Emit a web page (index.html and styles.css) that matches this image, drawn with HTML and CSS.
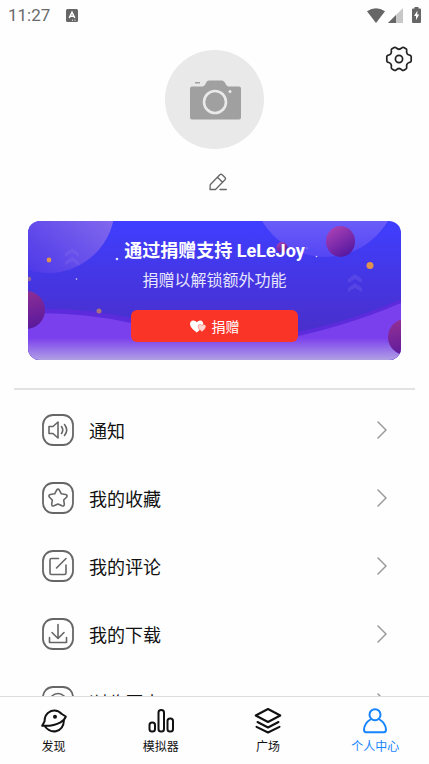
FILE: index.html
```html
<!DOCTYPE html>
<html lang="zh-CN">
<head>
<meta charset="utf-8">
<meta name="viewport" content="width=device-width, initial-scale=1">
<title>个人中心</title>
<link rel="stylesheet" href="styles.css">
</head>
<body>
<header class="status">
  <div class="status-side">
    <time>11:27</time>
    <svg width="12" height="13" viewBox="0 0 12 13" aria-hidden="true"><rect width="12" height="13" rx="1.5" fill="#666"/><path d="M3.2 9 6 3.200 8.800 9M4.200 7.200h3.600" fill="none" stroke="#fff" stroke-width="1.500"/><path d="M6 11.200h1M8.500 11.200h1" stroke="#fff"/></svg>
  </div>
  <div class="status-side status-right">
    <svg width="18" height="15" viewBox="0 0 18 15" aria-hidden="true"><path d="M0 3.200Q9-2.600 18 3.200L9 15Z" fill="#666"/></svg>
    <svg width="15" height="15" viewBox="0 0 15 15" aria-hidden="true"><path d="M15 0V15H0Z" fill="#c8c8c8"/><path d="M8 7V15H0Z" fill="#666"/></svg>
    <svg class="battery" width="9" height="16" viewBox="0 0 9 16" aria-hidden="true"><path d="M2.500 0h4v1.500H8q1 0 1 1V15q0 1-1 1H1q-1 0-1-1V2.500q0-1 1-1h1.500Z" fill="#666"/><path d="M5.500 3.500 2 9h2v4l3.300-5.500H5.200Z" fill="#fff"/></svg>
  </div>
</header>

<main class="content">
  <button class="settings" aria-label="设置">
    <svg width="28" height="28" viewBox="0 0 28 28" fill="none" stroke="#222" stroke-width="1.700" stroke-linejoin="round"><path d="M9.200 2.500Q10.300 2 11.200 2.900Q14 5.600 16.800 2.900Q17.700 2 18.800 2.500L21 3.800Q21.900 4.400 21.700 5.500Q20.900 9.200 24.700 10.200Q26 10.500 26.200 11.700V15.800Q26 17 24.700 17.300Q20.900 18.500 21.700 22.200Q21.900 23.300 21 23.900L18.800 25.200Q17.700 25.700 16.800 24.800Q14 22.200 11.200 24.800Q10.300 25.700 9.200 25.200L7 23.900Q6.100 23.300 6.300 22.200Q7.100 18.500 3.300 17.300Q2 17 1.800 15.800V11.700Q2 10.500 3.300 10.200Q7.100 9.200 6.300 5.500Q6.100 4.400 7 3.800Z"/><circle cx="14" cy="14" r="3.600"/></svg>
  </button>

  <button class="avatar" aria-label="更换头像">
    <svg width="52" height="40" viewBox="-1 0 52 40" aria-hidden="true"><path d="M5 2h5v1.500H5Z" fill="#a0a0a0"/><path d="M2 6.500H13Q15.500 5 16.500 2Q17.200 .5 19 .5H32Q33.500 .5 34.500 2Q36 5.500 38 6.500H49Q51 6.500 51 8.500V37.500Q51 39.500 49 39.500H2Q0 39.500 0 37.500V8.500Q0 6.500 2 6.500Z" fill="#a0a0a0"/><circle cx="25" cy="22" r="11" fill="none" stroke="#e9e9e9" stroke-width="2.600"/><circle cx="40" cy="11.500" r="1.500" fill="#e9e9e9"/></svg>
  </button>

  <button class="edit" aria-label="编辑昵称">
    <svg width="18" height="18" viewBox="0 0 18 18" fill="none" stroke="#666" stroke-width="1.300" stroke-linejoin="round" stroke-linecap="round"><path d="M1 16.500 1.200 11.800 10.800 1.800Q12 .7 13.200 1.800L16 4.500Q17 5.700 16 6.800L6.500 16.500ZM8.500 4.200 13.500 9.200M11 16.500H17.300"/></svg>
  </button>

  <section class="banner">
    <svg class="banner-art" viewBox="0 0 373 139" preserveAspectRatio="none" aria-hidden="true">
      <defs>
        <linearGradient id="sky" x1="0" y1="0" x2="0" y2="1"><stop offset="0" stop-color="#3f3eff"/><stop offset=".75" stop-color="#4930ce"/><stop offset="1" stop-color="#4930ce"/></linearGradient>
        <linearGradient id="moon" x1="1" y1=".25" x2=".35" y2="1"><stop offset="0" stop-color="#967bf0"/><stop offset="1" stop-color="#4d38e8"/></linearGradient>
        <linearGradient id="moon2" x1="0" y1=".5" x2="0" y2="1"><stop offset="0" stop-color="#8074fd"/><stop offset="1" stop-color="#5546f4"/></linearGradient>
        <linearGradient id="ball" x1=".2" y1="0" x2=".8" y2="1"><stop offset="0" stop-color="#ac42b5"/><stop offset="1" stop-color="#50159f"/></linearGradient>
        <linearGradient id="ball2" x1=".3" y1="0" x2=".6" y2="1"><stop offset="0" stop-color="#923095"/><stop offset="1" stop-color="#5a199c"/></linearGradient>
        <linearGradient id="fade" x1="0" y1="0" x2="0" y2="1"><stop offset="0" stop-color="#b0a0e4" stop-opacity="0"/><stop offset="1" stop-color="#b0a0e4"/></linearGradient>
      </defs>
      <rect width="373" height="139" fill="url(#sky)"/>
      <circle cx="20" cy="-15" r="67" fill="url(#moon)"/>
      <circle cx="297" cy="-37" r="73" fill="url(#moon2)"/>
      <path d="M0 88Q55 86 103 97L170 113 240 116Q310 106 373 78V139H0Z" fill="#5b2bdc"/>
      <path d="M0 92Q55 91 103 102L170 117 240 121Q310 109 373 82V139H0Z" fill="#7b40ed"/>
      <rect y="117" width="373" height="22" fill="url(#fade)"/>
      <circle cx="-2" cy="89" r="19" fill="url(#ball2)"/>
      <circle cx="378" cy="116" r="18" fill="url(#ball2)"/>
      <ellipse cx="312.500" cy="20.500" rx="14.500" ry="15.500" fill="url(#ball)"/>
      <circle cx="254" cy="26.500" r="5.500" fill="url(#ball)"/>
      <g fill="#df934f"><circle cx="21" cy="39" r="2.400"/><circle cx="342" cy="44.500" r="3.500"/><circle cx="71" cy="90" r="2.500" opacity=".65"/><circle cx="1" cy="58" r="2.200" opacity=".5"/></g>
      <g fill="#fff" opacity=".85"><circle cx="89" cy="38" r="1.300"/><circle cx="48.500" cy="58" r=".8"/><circle cx="288.500" cy="35.500" r=".8"/><circle cx="279" cy="27" r=".5"/></g>
      <g fill="#8c70ef" opacity=".25"><path d="M37 32 44 27 51 32V36L44 32 37 36ZM37 40.500 44 35.500 51 40.500V44.500L44 40.500 37 44.500ZM320 58 327 53 334 58V62L327 58 320 62ZM320 67 327 62 334 67V71L327 67 320 71Z"/></g>
    </svg>
    <h1>通过捐赠支持 LeLeJoy</h1>
    <p>捐赠以解锁额外功能</p>
    <button class="donate">
      <svg width="16" height="13" viewBox="0 0 16 13" aria-hidden="true"><path d="M6.800 12.500Q0 7.800 0 4Q.2.700 3.300.5 5.500.4 6.800 2.300 8.200.4 10.400.5 13 .7 13.300 4Q13.200 7.500 6.800 12.500Z" fill="#fff"/><path d="M12 11.800Q7.800 8.600 8 6.300 8.500 4.300 10.300 4.500 11.500 4.600 12 5.600 12.700 4.500 14 4.500 15.900 4.600 16 6.500 15.800 9 12 11.800Z" fill="#ffd5d2" stroke="#fb3428" stroke-width=".4"/></svg>
      捐赠
    </button>
  </section>

  <hr class="rule">

  <nav class="menu" aria-label="个人菜单">
    <a href="#notice">
      <svg class="tile" viewBox="0 0 32 32"><rect x="1" y="1" width="30" height="30" rx="10" stroke-width="1.800"/><path d="M7 12.500h4l5-4.500v16l-5-4.500H7ZM19.500 12.500q2.500 3.500 0 7M22.500 10.500q4.500 5.500 0 11"/></svg>
      <span>通知</span><svg class="chevron" viewBox="0 0 10 18"><path d="M1 1 9 9 1 17"/></svg>
    </a>
    <a href="#favorites">
      <svg class="tile" viewBox="0 0 32 32"><rect x="1" y="1" width="30" height="30" rx="10" stroke-width="1.800"/><path d="M14.600 8.200Q16 6 17.400 8.200L19.300 11.800 23.600 12.500Q26 13.200 24.500 15.200L21.700 18 22.300 22.200Q22.300 24.600 20 23.800L16 22 12 23.800Q9.700 24.600 9.700 22.200L10.300 18 7.500 15.200Q6 13.200 8.400 12.500L12.700 11.800Z"/></svg>
      <span>我的收藏</span><svg class="chevron" viewBox="0 0 10 18"><path d="M1 1 9 9 1 17"/></svg>
    </a>
    <a href="#comments">
      <svg class="tile" viewBox="0 0 32 32"><rect x="1" y="1" width="30" height="30" rx="10" stroke-width="1.800"/><path d="M16.500 8.500H9.500Q8 8.500 8 10V23Q8 24.500 9.500 24.500H22.500Q24 24.500 24 23V15M14.500 18 24 8.500"/></svg>
      <span>我的评论</span><svg class="chevron" viewBox="0 0 10 18"><path d="M1 1 9 9 1 17"/></svg>
    </a>
    <a href="#downloads">
      <svg class="tile" viewBox="0 0 32 32"><rect x="1" y="1" width="30" height="30" rx="10" stroke-width="1.800"/><path d="M16 6.500V20M10 14.500 16 20.500 22 14.500M7.500 19.500V24.500H24.500V19.500"/></svg>
      <span>我的下载</span><svg class="chevron" viewBox="0 0 10 18"><path d="M1 1 9 9 1 17"/></svg>
    </a>
    <a href="#history">
      <svg class="tile" viewBox="0 0 32 32"><rect x="1" y="1" width="30" height="30" rx="10" stroke-width="1.800"/><circle cx="16" cy="16" r="8.500"/><path d="M16 11v5.500h4"/></svg>
      <span>浏览历史</span><svg class="chevron" viewBox="0 0 10 18"><path d="M1 1 9 9 1 17"/></svg>
    </a>
  </nav>
</main>

<nav class="tabs" aria-label="主导航">
  <a href="#discover"><svg viewBox="0 0 28 28"><path d="M4.500 14.500Q4.500 7 10.500 4.300 17 1.800 21.800 7L25.800 9.500Q25 12.500 20.500 15.300 13 19.500 2.200 18.700L4.500 14.500M5 19.500Q9.500 25.300 16 24.200 23.500 22.500 24 13"/><circle cx="15" cy="9.700" r="2" fill="currentColor" stroke="none"/></svg><span>发现</span></a>
  <a href="#emulator"><svg viewBox="0 0 28 28"><rect x="2.500" y="15.500" width="5.500" height="9" rx="2.500"/><rect x="11.500" y="3" width="5.500" height="21.500" rx="2.500"/><rect x="20.500" y="11.500" width="5.500" height="13" rx="2.500"/></svg><span>模拟器</span></a>
  <a href="#plaza"><svg viewBox="0 0 28 28"><path d="M14 2 26.300 8.500 14 15 1.700 8.500ZM3.500 15 14 20.500 24.500 15M2.500 19.800 14 25.500 25.500 19.800"/></svg><span>广场</span></a>
  <a class="current" href="#me" aria-current="page"><svg viewBox="0 0 28 28"><circle cx="14" cy="7.700" r="5.500"/><path d="M9.500 12.500Q3.500 16 3 22.500 3 25.200 5 25.200H23Q25 25.200 25 22.500 24.500 16 18.500 12.500"/></svg><span>个人中心</span></a>
</nav>
</body>
</html>
```
FILE: styles.css
```css
* { box-sizing: border-box; }

body {
  margin: 0;
  height: 100vh;
  display: flex;
  flex-direction: column;
  background: #fefefe;
  color: #111;
  font-family: Roboto, "Noto Sans CJK SC", sans-serif;
}

button {
  border: 0;
  padding: 0;
  background: none;
  font: inherit;
  cursor: pointer;
}

a { color: inherit; text-decoration: none; }
svg { display: block; flex: none; }

.status {
  flex: none;
  height: 30px;
  padding: 0 8px;
  display: flex;
  align-items: center;
  justify-content: space-between;
  color: #6a6a6a;
  font-size: 17px;
}

.status-side { display: flex; align-items: center; gap: 16px; }
.status-right { gap: 3px; align-items: flex-end; }
.battery { margin-left: 6px; }

.content {
  flex: 1;
  min-height: 0;
  overflow: hidden;
  position: relative;
  display: flex;
  flex-direction: column;
  padding-top: 20px;
}

.settings { position: absolute; top: 15px; right: 16px; }

.avatar {
  flex: none;
  align-self: center;
  width: 99px;
  height: 99px;
  border-radius: 50%;
  background: #e9e9e9;
  display: grid;
  place-items: center;
}

.edit { align-self: center; margin: 24px 0 30px 6px; }

.banner {
  flex: none;
  position: relative;
  overflow: hidden;
  margin: 0 28px;
  padding: 16px 16px 18px;
  border-radius: 12px;
  display: flex;
  flex-direction: column;
  align-items: center;
  color: #fff;
}

.banner-art { position: absolute; inset: 0; width: 100%; height: 100%; }

.banner h1,
.banner p,
.donate { position: relative; margin: 0; }

.banner h1 { font-size: 18px; line-height: 28px; font-weight: 700; }
.banner p { font-size: 16px; line-height: 32px; color: #e8e6fc; }

.banner .donate {
  width: 167px;
  height: 32px;
  margin-top: 13px;
  border-radius: 6px;
  background: #fb3428;
  color: #fff;
  font-size: 14px;
  display: flex;
  align-items: center;
  justify-content: center;
  gap: 6px;
}

.rule {
  flex: none;
  width: auto;
  height: 2px;
  margin: 28px 14px 6px;
  border: 0;
  background: #e2e2e2;
}

.menu a {
  height: 68px;
  padding: 0 42px;
  display: flex;
  align-items: center;
  gap: 15px;
  font-size: 18px;
}

.menu span { flex: 1; }
.tile, .chevron { fill: none; stroke-linecap: round; stroke-linejoin: round; }
.tile { width: 32px; height: 32px; stroke: #666; stroke-width: 1.6; }
.chevron { width: 10px; height: 18px; stroke: #999; stroke-width: 1.5; }

.tabs {
  flex: none;
  height: 68px;
  border-top: 1px solid #ddd;
  background: #fefefe;
  display: grid;
  grid-template-columns: repeat(4, 1fr);
}

.tabs a {
  display: flex;
  flex-direction: column;
  align-items: center;
  padding-top: 10px;
  font-size: 12px;
  line-height: 24px;
}

.tabs svg {
  width: 28px;
  height: 28px;
  fill: none;
  stroke: currentColor;
  stroke-width: 2;
  stroke-linejoin: round;
  stroke-linecap: round;
}

.tabs .current { color: #1684fc; }
```
